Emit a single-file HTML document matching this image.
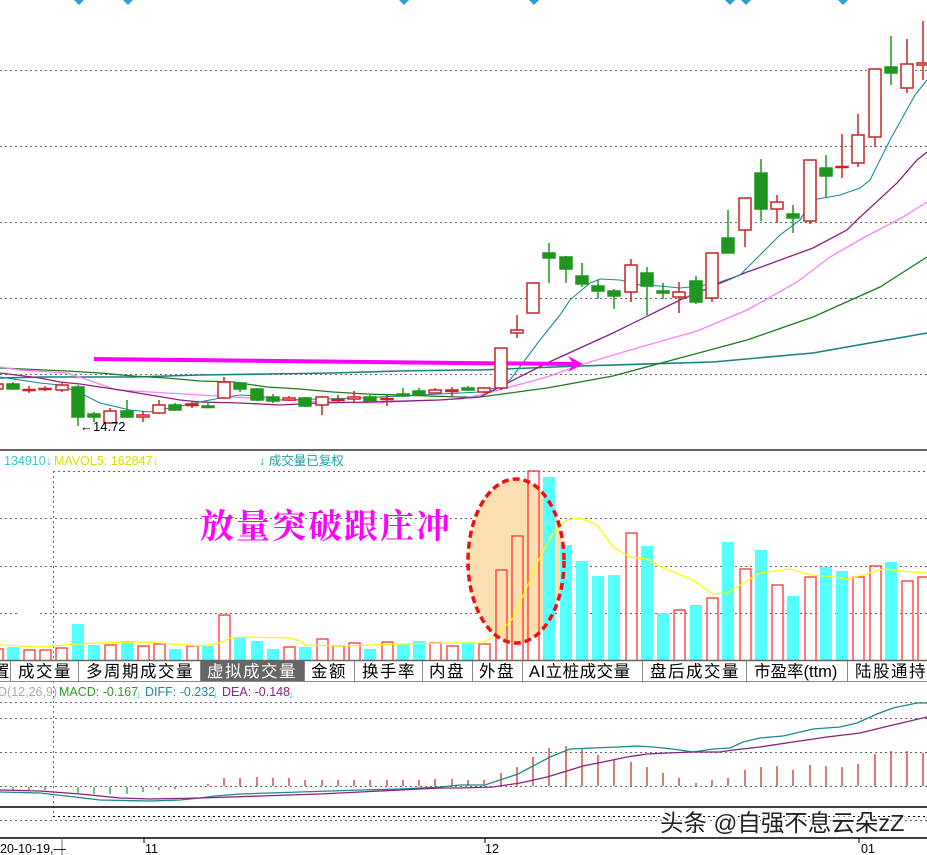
<!DOCTYPE html>
<html><head><meta charset="utf-8"><style>
html,body{margin:0;padding:0;background:#fff;width:927px;height:855px;overflow:hidden}
svg{display:block}
text{font-family:"Liberation Sans","Noto Sans CJK SC",sans-serif}
</style></head><body>
<svg width="927" height="855" viewBox="0 0 927 855" xmlns="http://www.w3.org/2000/svg">
<g fill="#2a9fd0">
<path d="M74,0 L84,0 L79,5Z"/><path d="M123,0 L133,0 L128,5Z"/><path d="M399,0 L409,0 L404,5Z"/><path d="M529,0 L539,0 L534,5Z"/><path d="M725,0 L735,0 L730,5Z"/><path d="M741,0 L751,0 L746,5Z"/><path d="M838,0 L848,0 L843,5Z"/>
</g>
<g stroke="#666" stroke-width="1" stroke-dasharray="2,3">
<line x1="0" y1="70.5" x2="927" y2="70.5"/><line x1="0" y1="146.5" x2="927" y2="146.5"/><line x1="0" y1="222.5" x2="927" y2="222.5"/><line x1="0" y1="298.5" x2="927" y2="298.5"/><line x1="0" y1="374.5" x2="927" y2="374.5"/>
</g>
<g fill="none">
<polyline stroke="#1a8080" stroke-width="1.6" points="0,378 43,377 133,377 200,375 267,374 333,373 400,371 460,370 480,370 580,366 713,362 813,353 927,333"/>
<polyline stroke="#1e7a1e" stroke-width="1.3" points="0,368 67,371 100,373 133,376 167,378 200,381 233,382 267,387 300,389 333,392 367,394 460,397 480,397 547,388 613,376 680,358 747,340 813,317 880,287 927,257"/>
<polyline stroke="#ff80ff" stroke-width="1.3" points="0,367 20,370 67,373 85,379 117,390 167,393 233,397 300,401 367,403 460,399 480,395 547,377 580,365 630,350 697,331 747,310 797,282 830,257 863,238 903,217 927,202"/>
<polyline stroke="#8a2080" stroke-width="1.3" points="0,373 40,378 60,382 80,384 120,390 150,395 180,400 200,402 240,403 280,405 320,403 370,402 440,400 480,397 547,363 613,333 680,300 747,272 753,270 813,248 847,230 857,220 897,183 917,160 927,152"/>
<polyline stroke="#1a8a9a" stroke-width="1.1" points="0,377 40,383 60,385 80,393 100,403 130,410 150,412 170,408 200,402 220,398 240,395 260,396 280,400 320,399 360,398 400,396 460,393 480,392 495,388 510,380 525,360 540,340 560,315 570,300 590,283 600,279 620,280 640,285 660,286 680,288 700,286 720,282 740,275 760,255 780,235 800,220 812,200 840,195 860,188 870,180 880,160 890,140 900,122 915,95 927,80"/>
</g>
<polygon fill="#ff00ff" points="94,357 460,361 572,362 568,356 583,364 568,372 572,366 460,365 94,361"/>
<g stroke-width="1.5">
<g stroke="#1e9620" fill="#1e9620">
<line x1="13" y1="382" x2="13" y2="390"/><rect x="7" y="384" width="12" height="5"/>
<line x1="78" y1="385" x2="78" y2="426"/><rect x="72" y="387" width="12" height="30"/>
<line x1="94" y1="412" x2="94" y2="422"/><rect x="88" y="414" width="12" height="3"/>
<line x1="127" y1="400" x2="127" y2="418"/><rect x="121" y="411" width="12" height="6"/>
<line x1="175" y1="403" x2="175" y2="411"/><rect x="169" y="405" width="12" height="5"/>
<line x1="208" y1="402" x2="208" y2="408"/><rect x="202" y="406" width="12" height="1.5"/>
<line x1="240" y1="382" x2="240" y2="392"/><rect x="234" y="383" width="12" height="6"/>
<line x1="257" y1="388" x2="257" y2="401"/><rect x="251" y="389" width="12" height="11"/>
<line x1="273" y1="394" x2="273" y2="403"/><rect x="267" y="397" width="12" height="4"/>
<line x1="305" y1="397" x2="305" y2="407"/><rect x="299" y="398" width="12" height="8"/>
<line x1="370" y1="394" x2="370" y2="402"/><rect x="364" y="397" width="12" height="4"/>
<line x1="403" y1="388" x2="403" y2="397"/><rect x="397" y="394" width="12" height="2"/>
<line x1="419" y1="388" x2="419" y2="396"/><rect x="413" y="391" width="12" height="4"/>
<line x1="468" y1="386" x2="468" y2="391"/><rect x="462" y="388" width="12" height="2"/>
<line x1="549" y1="243" x2="549" y2="283"/><rect x="543" y="253" width="12" height="5"/>
<line x1="566" y1="256" x2="566" y2="283"/><rect x="560" y="257" width="12" height="12"/>
<line x1="582" y1="263" x2="582" y2="287"/><rect x="576" y="276" width="12" height="8"/>
<line x1="598" y1="280" x2="598" y2="299"/><rect x="592" y="286" width="12" height="5"/>
<line x1="614" y1="289" x2="614" y2="309"/><rect x="608" y="291" width="12" height="5"/>
<line x1="647" y1="267" x2="647" y2="315"/><rect x="641" y="273" width="12" height="13"/>
<line x1="663" y1="283" x2="663" y2="299"/><rect x="657" y="291" width="12" height="2"/>
<line x1="696" y1="276" x2="696" y2="304"/><rect x="690" y="281" width="12" height="21"/>
<line x1="728" y1="210" x2="728" y2="253"/><rect x="722" y="238" width="12" height="15"/>
<line x1="761" y1="159" x2="761" y2="221"/><rect x="755" y="173" width="12" height="36"/>
<line x1="793" y1="205" x2="793" y2="233"/><rect x="787" y="214" width="12" height="4"/>
<line x1="826" y1="155" x2="826" y2="198"/><rect x="820" y="168" width="12" height="8"/>
<line x1="891" y1="36" x2="891" y2="85"/><rect x="885" y="67" width="12" height="6"/>
</g>
<g stroke="#cc2222" fill="#fff">
<line x1="-3" y1="382" x2="-3" y2="391"/><rect x="-9" y="384" width="12" height="5"/>
<line x1="29" y1="386" x2="29" y2="393"/><rect x="23" y="389.5" width="12" height="1" fill="#cc2222"/>
<line x1="45" y1="386" x2="45" y2="391"/><rect x="39" y="388.5" width="12" height="1" fill="#cc2222"/>
<line x1="62" y1="383" x2="62" y2="392"/><rect x="56" y="385" width="12" height="5"/>
<line x1="110" y1="408" x2="110" y2="424"/><rect x="104" y="411" width="12" height="12"/>
<line x1="143" y1="411" x2="143" y2="422"/><rect x="137" y="415" width="12" height="2"/>
<line x1="159" y1="400" x2="159" y2="414"/><rect x="153" y="405" width="12" height="8"/>
<line x1="192" y1="402" x2="192" y2="408"/><rect x="186" y="404" width="12" height="1.5" fill="#cc2222"/>
<line x1="224" y1="377" x2="224" y2="398"/><rect x="218" y="382" width="12" height="16"/>
<line x1="289" y1="396" x2="289" y2="401"/><rect x="283" y="398" width="12" height="2"/>
<line x1="322" y1="396" x2="322" y2="415"/><rect x="316" y="397" width="12" height="8"/>
<line x1="338" y1="395" x2="338" y2="402"/><rect x="332" y="399.5" width="12" height="1" fill="#cc2222"/>
<line x1="354" y1="391" x2="354" y2="403"/><rect x="348" y="397" width="12" height="2"/>
<line x1="387" y1="395" x2="387" y2="406"/><rect x="381" y="398.5" width="12" height="1" fill="#cc2222"/>
<line x1="435" y1="388" x2="435" y2="394"/><rect x="429" y="390" width="12" height="3"/>
<line x1="452" y1="387" x2="452" y2="396"/><rect x="446" y="390" width="12" height="1.5"/>
<line x1="484" y1="387" x2="484" y2="393"/><rect x="478" y="388" width="12" height="4"/>
<line x1="501" y1="348" x2="501" y2="390"/><rect x="495" y="348" width="12" height="40"/>
<line x1="517" y1="315" x2="517" y2="338"/><rect x="511" y="330" width="12" height="3"/>
<rect x="527" y="283" width="12" height="30"/>
<line x1="631" y1="259" x2="631" y2="302"/><rect x="625" y="265" width="12" height="27"/>
<line x1="679" y1="282" x2="679" y2="313"/><rect x="673" y="292" width="12" height="5"/>
<line x1="712" y1="253" x2="712" y2="302"/><rect x="706" y="253" width="12" height="45"/>
<line x1="745" y1="198" x2="745" y2="247"/><rect x="739" y="198" width="12" height="32"/>
<line x1="777" y1="195" x2="777" y2="223"/><rect x="771" y="202" width="12" height="7"/>
<line x1="810" y1="160" x2="810" y2="224"/><rect x="804" y="160" width="12" height="61"/>
<line x1="842" y1="134" x2="842" y2="178"/><rect x="836" y="166.5" width="12" height="1" fill="#cc2222"/>
<line x1="858" y1="114" x2="858" y2="167"/><rect x="852" y="135" width="12" height="28"/>
<line x1="875" y1="69" x2="875" y2="147"/><rect x="869" y="69" width="12" height="68"/>
<line x1="907" y1="39" x2="907" y2="93"/><rect x="901" y="64" width="12" height="24"/>
<line x1="923" y1="21" x2="923" y2="80"/><rect x="917" y="63" width="12" height="2"/>
</g>
</g>
<text x="80" y="431" font-size="13" fill="#000">←14.72</text>

<line x1="0" y1="450" x2="927" y2="450" stroke="#666" stroke-width="2"/>
<text x="4" y="465" font-size="12.5" fill="#33cccc">134910↓</text>
<text x="54" y="465" font-size="12.5" fill="#e0e000">MAVOL5: 162847↓</text>
<text x="259" y="465" font-size="12.5" fill="#1aa0a0">↓ 成交量已复权</text>
<g stroke="#666" stroke-dasharray="2,3">
<line x1="53" y1="471.5" x2="927" y2="471.5"/><line x1="0" y1="518.5" x2="927" y2="518.5"/><line x1="0" y1="566.5" x2="927" y2="566.5"/><line x1="0" y1="613.5" x2="20" y2="613.5"/><line x1="40" y1="613.5" x2="927" y2="613.5"/>
<line x1="53.5" y1="471" x2="53.5" y2="816"/>
</g>
<ellipse cx="516" cy="561" rx="48" ry="82" fill="#fde0b2"/>
<g fill="#55ffff">
<rect x="7" y="647" width="12" height="13"/><rect x="72" y="624" width="12" height="36"/><rect x="88" y="645" width="12" height="15"/><rect x="121" y="641" width="12" height="19"/><rect x="169" y="649" width="12" height="11"/><rect x="202" y="646" width="12" height="14"/><rect x="234" y="637" width="12" height="23"/><rect x="251" y="641" width="12" height="19"/><rect x="267" y="649" width="12" height="11"/><rect x="299" y="647" width="12" height="13"/><rect x="364" y="649" width="12" height="11"/><rect x="397" y="644" width="12" height="16"/><rect x="413" y="641" width="12" height="19"/><rect x="462" y="642" width="12" height="18"/>
<rect x="543" y="477" width="12" height="183"/><rect x="560" y="545" width="12" height="115"/><rect x="576" y="561" width="12" height="99"/><rect x="592" y="576" width="12" height="84"/><rect x="608" y="575" width="12" height="85"/><rect x="641" y="546" width="12" height="114"/><rect x="657" y="613" width="12" height="47"/><rect x="690" y="605" width="12" height="55"/><rect x="722" y="542" width="12" height="118"/><rect x="755" y="550" width="12" height="110"/><rect x="787" y="596" width="12" height="64"/><rect x="820" y="567" width="12" height="93"/><rect x="836" y="571" width="12" height="89"/><rect x="885" y="562" width="12" height="98"/>
</g>
<g fill="none" stroke="#ff3333" stroke-width="1.3">
<rect x="-9" y="649" width="12" height="12"/><rect x="24" y="650" width="11" height="11"/><rect x="40" y="650" width="11" height="11"/><rect x="56" y="648" width="11" height="13"/><rect x="105" y="645" width="11" height="16"/><rect x="138" y="646" width="11" height="15"/><rect x="154" y="644" width="11" height="17"/><rect x="187" y="646" width="11" height="15"/><rect x="219" y="615" width="11" height="46"/><rect x="284" y="647" width="11" height="14"/><rect x="317" y="639" width="11" height="22"/><rect x="333" y="646" width="11" height="15"/><rect x="349" y="643" width="11" height="18"/><rect x="382" y="642" width="11" height="19"/><rect x="430" y="643" width="11" height="18"/><rect x="447" y="646" width="11" height="15"/>
<rect x="479" y="644" width="11" height="17"/><rect x="496" y="570" width="11" height="91"/><rect x="512" y="536" width="11" height="125"/><rect x="528" y="471" width="11" height="190"/><rect x="626" y="533" width="11" height="128"/><rect x="674" y="610" width="11" height="51"/><rect x="707" y="598" width="11" height="63"/><rect x="740" y="569" width="11" height="92"/><rect x="772" y="585" width="11" height="76"/><rect x="805" y="577" width="11" height="84"/><rect x="853" y="577" width="11" height="84"/><rect x="870" y="566" width="11" height="95"/><rect x="902" y="581" width="11" height="80"/><rect x="918" y="577" width="11" height="84"/>
</g>
<polyline fill="none" stroke="#ffff00" stroke-width="1.3" points="0,645 40,647 78,644 100,643 145,642 200,646 220,643 230,638 250,637 290,638 300,641 305,645 340,646 400,644 460,643 483,643 500,632 513,618 527,587 540,557 553,533 567,520 580,518 597,525 613,547 630,557 647,559 663,568 693,580 713,594 727,593 747,581 760,573 790,569 810,575 827,576 847,579 863,575 883,569 900,571 927,573"/>
<ellipse cx="516" cy="561" rx="48" ry="82" fill="none" stroke="#ee1111" stroke-width="3.5" stroke-dasharray="7,4"/>
<rect x="0" y="660" width="927" height="22" fill="#fff"/>
<line x1="0" y1="660.5" x2="927" y2="660.5" stroke="#666" stroke-width="1.5"/>
<line x1="0" y1="681.5" x2="927" y2="681.5" stroke="#888" stroke-width="1"/>
<rect x="201" y="661" width="103" height="20" fill="#666"/>
<g stroke="#888" stroke-width="1">
<line x1="10.5" y1="661" x2="10.5" y2="681"/><line x1="78.5" y1="661" x2="78.5" y2="681"/><line x1="200.5" y1="661" x2="200.5" y2="681"/><line x1="304.5" y1="661" x2="304.5" y2="681"/><line x1="354.5" y1="661" x2="354.5" y2="681"/><line x1="422.5" y1="661" x2="422.5" y2="681"/><line x1="472.5" y1="661" x2="472.5" y2="681"/><line x1="522.5" y1="661" x2="522.5" y2="681"/><line x1="642.5" y1="661" x2="642.5" y2="681"/><line x1="746.5" y1="661" x2="746.5" y2="681"/><line x1="847.5" y1="661" x2="847.5" y2="681"/>
</g>
<g font-size="16.5" fill="#000">
<text x="-7" y="677">置</text>
<text x="18" y="677" letter-spacing="1.5">成交量</text>
<text x="86" y="677" letter-spacing="1.5">多周期成交量</text>
<text x="207" y="677" fill="#fff" letter-spacing="1.5">虚拟成交量</text>
<text x="311" y="677" letter-spacing="1.5">金额</text>
<text x="362" y="677" letter-spacing="1.5">换手率</text>
<text x="429" y="677" letter-spacing="1.5">内盘</text>
<text x="479" y="677" letter-spacing="1.5">外盘</text>
<text x="529" y="677" letter-spacing="0.5">AI立桩成交量</text>
<text x="650" y="677" letter-spacing="1.5">盘后成交量</text>
<text x="754" y="677">市盈率(ttm)</text>
<text x="855" y="677" letter-spacing="1.5">陆股通持</text>
</g>
<g font-size="12.5">
<text x="-2" y="696" fill="#aaa">D(12,26,9)</text>
<text x="59" y="696" fill="#2a9a2a">MACD: -0.167</text>
<text x="135" y="698" fill="#33dddd">↓</text>
<text x="145" y="696" fill="#1a8a9a">DIFF: -0.232</text>
<text x="212" y="698" fill="#33dddd">↓</text>
<text x="222" y="696" fill="#8a2080">DEA: -0.148</text>
<text x="288" y="698" fill="#33dddd">↓</text>
</g>
<g stroke="#666" stroke-dasharray="2,3">
<line x1="0" y1="702.5" x2="927" y2="702.5"/><line x1="0" y1="718.5" x2="927" y2="718.5"/><line x1="0" y1="752.5" x2="927" y2="752.5"/><line x1="0" y1="786.5" x2="927" y2="786.5"/>
<line x1="53" y1="816.5" x2="927" y2="816.5" stroke="#000"/><line x1="0" y1="820.5" x2="927" y2="820.5"/>
</g>
<g stroke="#1e9620" stroke-width="1.2">
<line x1="13" y1="787" x2="13" y2="790"/><line x1="29" y1="787" x2="29" y2="790"/><line x1="45" y1="787" x2="45" y2="790"/><line x1="78" y1="787" x2="78" y2="793"/><line x1="94" y1="787" x2="94" y2="794"/><line x1="110" y1="787" x2="110" y2="794"/><line x1="127" y1="787" x2="127" y2="794"/><line x1="143" y1="787" x2="143" y2="792"/><line x1="159" y1="787" x2="159" y2="790"/><line x1="175" y1="787" x2="175" y2="789"/>
</g>
<g stroke="#cc2222" stroke-width="1.2">
<line x1="208" y1="786" x2="208" y2="784"/><line x1="224" y1="786" x2="224" y2="778"/><line x1="240" y1="786" x2="240" y2="778"/><line x1="257" y1="786" x2="257" y2="777"/><line x1="273" y1="786" x2="273" y2="778"/><line x1="289" y1="786" x2="289" y2="778"/><line x1="305" y1="786" x2="305" y2="780"/><line x1="322" y1="786" x2="322" y2="780"/><line x1="338" y1="786" x2="338" y2="780"/><line x1="354" y1="786" x2="354" y2="780"/><line x1="370" y1="786" x2="370" y2="780"/><line x1="387" y1="786" x2="387" y2="780"/><line x1="403" y1="786" x2="403" y2="780"/><line x1="419" y1="786" x2="419" y2="780"/><line x1="435" y1="786" x2="435" y2="779"/><line x1="452" y1="786" x2="452" y2="779"/>
<line x1="468" y1="786" x2="468" y2="780"/><line x1="484" y1="786" x2="484" y2="780"/><line x1="501" y1="786" x2="501" y2="773"/><line x1="517" y1="786" x2="517" y2="767"/><line x1="533" y1="786" x2="533" y2="757"/><line x1="549" y1="786" x2="549" y2="748"/><line x1="566" y1="786" x2="566" y2="746"/><line x1="582" y1="786" x2="582" y2="749"/><line x1="598" y1="786" x2="598" y2="755"/><line x1="614" y1="786" x2="614" y2="760"/><line x1="631" y1="786" x2="631" y2="762"/><line x1="647" y1="786" x2="647" y2="767"/><line x1="663" y1="786" x2="663" y2="773"/><line x1="679" y1="786" x2="679" y2="778"/><line x1="696" y1="786" x2="696" y2="783"/><line x1="712" y1="786" x2="712" y2="780"/><line x1="728" y1="786" x2="728" y2="778"/><line x1="745" y1="786" x2="745" y2="770"/><line x1="761" y1="786" x2="761" y2="767"/><line x1="777" y1="786" x2="777" y2="766"/><line x1="793" y1="786" x2="793" y2="770"/><line x1="810" y1="786" x2="810" y2="765"/><line x1="826" y1="786" x2="826" y2="766"/><line x1="842" y1="786" x2="842" y2="767"/><line x1="858" y1="786" x2="858" y2="764"/><line x1="875" y1="786" x2="875" y2="754"/><line x1="891" y1="786" x2="891" y2="751"/><line x1="907" y1="786" x2="907" y2="751"/><line x1="923" y1="786" x2="923" y2="753"/>
</g>
<polyline fill="none" stroke="#1a8a8a" stroke-width="1.3" points="0,792 40,793 75,797 100,800 150,801 180,800 200,798 215,796 240,794 300,792 360,790 400,789 440,787 460,785 485,785 500,780 518,774 533,766 550,757 570,749 593,748 617,747 637,746 653,747 663,748 680,750 693,752 713,749 730,748 743,742 760,738 783,736 813,729 840,727 857,723 877,714 893,708 917,703 927,703"/>
<polyline fill="none" stroke="#8a2080" stroke-width="1.3" points="0,790 40,791 80,794 120,798 150,799 200,798 260,796 320,794 380,791 440,788 460,788 493,787 520,783 547,777 567,771 583,766 603,762 627,757 647,754 667,753 693,752 720,752 733,750 760,747 793,742 827,737 860,733 893,725 927,717"/>
<line x1="0" y1="807" x2="927" y2="807" stroke="#000" stroke-width="1.5"/>
<line x1="0" y1="838" x2="927" y2="838" stroke="#000" stroke-width="1.5"/>
<line x1="62" y1="838" x2="62" y2="855" stroke="#666"/>
<line x1="144" y1="838" x2="144" y2="843" stroke="#000"/>
<line x1="485" y1="838" x2="485" y2="843" stroke="#000"/>
<line x1="859" y1="838" x2="859" y2="843" stroke="#000"/>
<g font-size="12.5" fill="#000">
<text x="0" y="853">20-10-19,—</text>
<text x="145" y="853">11</text>
<text x="485" y="853">12</text>
<text x="861" y="853">01</text>
</g>
<text x="660" y="831" font-size="23.5" fill="#222" stroke="#fff" stroke-width="3" paint-order="stroke">头条 @自强不息云朵zZ</text>
<text x="200" y="538" font-size="34" fill="#ff00ff" font-weight="bold" letter-spacing="2" style="font-family:'Noto Serif CJK SC',serif">放量突破跟庄冲</text>
</svg>
</body></html>
